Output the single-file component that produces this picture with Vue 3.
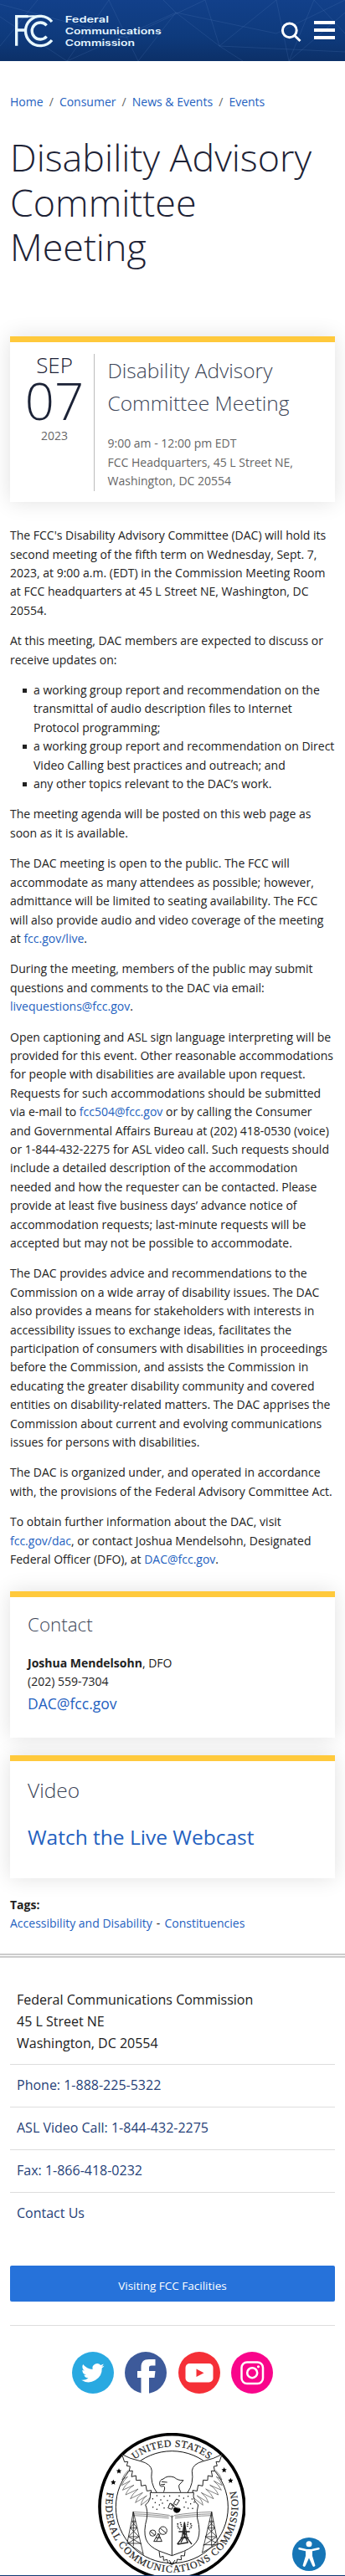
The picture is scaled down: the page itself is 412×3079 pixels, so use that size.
<script setup>
const crumbs = ['Home', 'Consumer', 'News & Events', 'Events']
const contacts = ['Phone: 1-888-225-5322', 'ASL Video Call: 1-844-432-2275', 'Fax: 1-866-418-0232', 'Contact Us']
const stars = [[126, 191], [106, 231], [503, 187], [526, 225]]
const dots = [[247, 290], [262, 279], [276, 294], [288, 281], [256, 304], [271, 312], [248, 320], [288, 323], [300, 296], [308, 280], [282, 306], [342, 280], [358, 288], [374, 281], [388, 291], [366, 302], [383, 308], [396, 302], [360, 320], [374, 324], [390, 325], [262, 328]]
</script>

<template>
  <div class="page">
    <header class="top">
      <svg class="web" viewBox="0 0 412 73" aria-hidden="true">
        <path d="M0 55L45 0M0 20L80 73L130 0M80 73L210 15L262 55L330 0M130 0L165 73L210 15L195 0M262 55L290 73M262 55L412 62M262 55L245 0M330 0L345 73L412 15M345 73L375 0L412 40M0 5L150 45L245 0M210 15L330 40L412 0" />
      </svg>
      <svg class="logo" viewBox="50 50 535 120" role="img" aria-label="FCC">
        <g fill="none" stroke="#e8f8ff" stroke-width="10">
          <path d="M100 58H58V163M58 107H92" />
          <path d="M185 77A53 53 0 1 0 185 143" />
          <path d="M166 90A30 30 0 1 0 166 130" />
          <path d="M96 58Q120 56 136 58" stroke-width="7" />
        </g>
        <g class="wordmark">
          <text x="232" y="81" textLength="157" lengthAdjust="spacingAndGlyphs">Federal</text>
          <text x="232" y="122" textLength="345" lengthAdjust="spacingAndGlyphs">Communications</text>
          <text x="232" y="163" textLength="250" lengthAdjust="spacingAndGlyphs">Commission</text>
        </g>
      </svg>
      <svg class="search" viewBox="0 0 26 26"><circle cx="10.8" cy="10.3" r="8.4" /><path d="M16.8 16.5L23.5 23" /></svg>
      <div class="menu"><i /><i /><i /></div>
    </header>

    <main>
      <nav class="crumbs">
        <template v-for="(c, i) in crumbs" :key="c"><span v-if="i" class="slash">/</span><a>{{ c }}</a></template>
      </nav>
      <h1>Disability Advisory<br>Committee<br>Meeting</h1>

      <section class="card event">
        <div class="date">
          <div class="month">SEP</div>
          <div class="day">07</div>
          <div class="year">2023</div>
        </div>
        <div class="info">
          <h2>Disability Advisory<br>Committee Meeting</h2>
          <p>9:00 am - 12:00 pm EDT<br>FCC Headquarters, 45 L Street NE,<br>Washington, DC 20554</p>
        </div>
      </section>

      <article>
        <p>The FCC's Disability Advisory Committee (DAC) will hold its<br>second meeting of the fifth term on Wednesday, Sept. 7,<br>2023, at 9:00 a.m. (EDT) in the Commission Meeting Room<br>at FCC headquarters at 45 L Street NE, Washington, DC<br>20554.</p>
        <p>At this meeting, DAC members are expected to discuss or<br>receive updates on:</p>
        <ul>
          <li>a working group report and recommendation on the<br>transmittal of audio description files to Internet<br>Protocol programming;</li>
          <li>a working group report and recommendation on Direct<br>Video Calling best practices and outreach; and</li>
          <li>any other topics relevant to the DAC’s work.</li>
        </ul>
        <p>The meeting agenda will be posted on this web page as<br>soon as it is available.</p>
        <p>The DAC meeting is open to the public. The FCC will<br>accommodate as many attendees as possible; however,<br>admittance will be limited to seating availability. The FCC<br>will also provide audio and video coverage of the meeting<br>at <a>fcc.gov/live</a>.</p>
        <p>During the meeting, members of the public may submit<br>questions and comments to the DAC via email:<br><a>livequestions@fcc.gov</a>.</p>
        <p>Open captioning and ASL sign language interpreting will be<br>provided for this event. Other reasonable accommodations<br>for people with disabilities are available upon request.<br>Requests for such accommodations should be submitted<br>via e-mail to <a>fcc504@fcc.gov</a> or by calling the Consumer<br>and Governmental Affairs Bureau at (202) 418-0530 (voice)<br>or 1-844-432-2275 for ASL video call. Such requests should<br>include a detailed description of the accommodation<br>needed and how the requester can be contacted. Please<br>provide at least five business days’ advance notice of<br>accommodation requests; last-minute requests will be<br>accepted but may not be possible to accommodate.</p>
        <p>The DAC provides advice and recommendations to the<br>Commission on a wide array of disability issues. The DAC<br>also provides a means for stakeholders with interests in<br>accessibility issues to exchange ideas, facilitates the<br>participation of consumers with disabilities in proceedings<br>before the Commission, and assists the Commission in<br>educating the greater disability community and covered<br>entities on disability-related matters. The DAC apprises the<br>Commission about current and evolving communications<br>issues for persons with disabilities.</p>
        <p>The DAC is organized under, and operated in accordance<br>with, the provisions of the Federal Advisory Committee Act.</p>
        <p>To obtain further information about the DAC, visit<br><a>fcc.gov/dac</a>, or contact Joshua Mendelsohn, Designated<br>Federal Officer (DFO), at <a>DAC@fcc.gov</a>.</p>
      </article>

      <section class="card contact">
        <h2>Contact</h2>
        <div><b>Joshua Mendelsohn</b>, DFO</div>
        <div>(202) 559-7304</div>
        <a class="mail">DAC@fcc.gov</a>
      </section>
      <section class="card video">
        <h2>Video</h2>
        <a>Watch the Live Webcast</a>
      </section>

      <div class="tags">
        <b>Tags:</b>
        <div><a>Accessibility and Disability</a><span> - </span><a>Constituencies</a></div>
      </div>
    </main>

    <footer>
      <div class="rows">
        <address>Federal Communications Commission<br>45 L Street NE<br>Washington, DC 20554</address>
        <a v-for="c in contacts" :key="c">{{ c }}</a>
      </div>
      <button>Visiting FCC Facilities</button>
      <div class="social">
        <svg viewBox="0 0 50 50"><circle cx="25" cy="25" r="25" fill="#29a9e1" /><path fill="#fff" transform="translate(11.2 11.5) scale(1.14)" d="M24 4.6a10 10 0 0 1-2.8.8 5 5 0 0 0 2.1-2.7 10 10 0 0 1-3.1 1.2 4.9 4.9 0 0 0-8.4 4.5A14 14 0 0 1 1.7 3.1a4.9 4.9 0 0 0 1.5 6.6 4.9 4.9 0 0 1-2.2-.6v.1a4.9 4.9 0 0 0 3.9 4.8 5 5 0 0 1-2.2.1 4.9 4.9 0 0 0 4.6 3.4A9.900 9.900 0 0 1 0 19.500 14 14 0 0 0 21.500 7.100 10 10 0 0 0 24 4.600z" /></svg>
        <svg viewBox="0 0 50 50"><circle cx="25" cy="25" r="25" fill="#3d5a9a" /><path fill="#fff" d="M19.500 50V31H15V23H19.500V18.500C19.500 12 22.500 9 29 9H36.500V16.500H32C29.500 16.500 29 17.500 29 19.500V23H36.500L35.500 31H29V50z" /></svg>
        <svg viewBox="0 0 50 50"><circle cx="25" cy="25" r="25" fill="#f52f37" /><rect x="8.500" y="14" width="33" height="22.500" rx="5" fill="#fff" /><path fill="#f52f37" d="M21.500 20.500L30.500 25.200L21.500 30z" /></svg>
        <svg viewBox="0 0 50 50"><circle cx="25" cy="25" r="25" fill="#f9058b" /><rect x="12.500" y="12.500" width="25.500" height="25.500" rx="6.500" fill="none" stroke="#fff" stroke-width="2.500" /><circle cx="25.200" cy="25.200" r="6" fill="none" stroke="#fff" stroke-width="2.600" /><circle cx="32.500" cy="17.800" r="1.600" fill="#fff" /></svg>
      </div>

      <svg class="seal" viewBox="51 54 528 510" role="img" aria-label="Federal Communications Commission seal">
        <defs>
          <path id="seal-top" d="M180.400 151.500A215 215 0 0 1 451.600 151.500" />
          <path id="seal-low" d="M85.100 263A237 237 0 1 0 546.900 263" />
        </defs>
        <circle cx="316" cy="318" r="259" fill="#fff" stroke="#000" stroke-width="11" />
        <circle cx="316" cy="320" r="201" fill="none" stroke="#111" stroke-width="3" />
        <text class="ring"><textPath href="#seal-top" textLength="286" startOffset="3">UNITED STATES</textPath></text>
        <text class="ring"><textPath href="#seal-low" textLength="850" startOffset="3">FEDERAL COMMUNICATIONS COMMISSION</textPath></text>
        <path v-for="s in stars" :key="s[0]" :transform="`translate(${s[0]} ${s[1]})`" d="M0-10L2.800-3.500L9.500-3L4.500 1.500L6 8.500L0 5L-6 8.500L-4.500 1.500L-9.500-3L-2.800-3.500z" />
        <g fill="none" stroke="#222" stroke-width="3" stroke-linejoin="round">
          <path fill="#fff" d="M137 131L146 158L158 157L154 172L166 174L163 191L175 190L171 211L187 207L188 224L204 223L206 244L222 241L226 262L242 260L240 276L262 268Q237 235 244 190Q242 165 203 155Q165 147 137 131z" />
          <path fill="#fff" d="M495 131L486 158L474 157L478 172L466 174L469 191L457 190L461 211L445 207L444 224L428 223L426 244L410 241L406 262L390 260L392 276L372 268Q395 235 388 190Q390 165 429 155Q467 147 495 131z" />
          <g stroke-width="2" stroke="#444">
            <path d="M160 188Q143 203 137 222L157 211Q142 225 136 242L166 226Q146 242 139 259L180 241Q157 255 150 276L195 255Q173 273 167 290L211 268Q190 284 185 304L226 279Q208 292 205 313L238 287" />
            <path d="M472 188Q489 203 495 222L475 211Q490 225 496 242L466 226Q486 242 493 259L452 241Q475 255 482 276L437 255Q459 273 465 290L421 268Q442 284 447 304L406 279Q424 292 427 313L394 287" />
          </g>
          <path d="M286 266Q294 249 286 244Q275 250 272 239Q270 222 285 219Q300 205 324 213Q337 225 357 224L345 237Q336 241 347 266M279 229L299 231M275 240L291 238" />
          <path fill="#fff" d="M238 268H394Q389 294 410 312Q404 331 407 360Q420 408 409 435Q397 462 359 478L316 494L272 478Q233 462 223 435Q213 408 226 360Q230 331 221 312Q243 294 238 268z" />
          <path d="M316 350V494" />
          <path stroke-width="1.500" d="M176 337Q250 341 305 349L316 356L327 349Q380 340 459 337M176 344Q250 347 305 354M176 350Q250 353 305 360M459 344Q380 347 327 354M459 350Q380 353 327 360M176 337V350M459 337V350" />
          <path stroke-width="2.500" d="M178 337L155 452M178 337L214 491M458 337L424 485M458 337L481 452M172 370H186M167 395H191M160 426H198M156 450H206M450 370H465M444 395H470M435 426H477M428 455H481M186 370L167 395L198 426L158 450L213 487M172 370L191 395L160 426L206 452M450 370L470 395L435 426L481 452L426 482M465 370L444 395L477 426L428 458M178 337V460M458 337V460" />
          <path d="M270 478L273 500L285 496L286 511L299 508L301 519L316 526L333 517L335 507L350 509L348 494L361 495L363 478M316 526L306 510M316 526L327 510" />
          <path d="M302 323L315 328L322 312L309 306zM322 307L332 291L343 296L332 313zM312 311L328 319M325 322L344 325Q346 337 332 339Q319 337 322 324" />
          <circle cx="247" cy="413" r="11" /><circle cx="284" cy="404" r="14" />
          <path d="M239 407L255 421M273 395L296 414M267 414L251 443H280L267 414M258 430H276M274 415L260 443" />
          <path stroke-width="4" d="M361 374L352 430L335 453M361 374L370 430L387 453M340 408L380 408M347 430L376 430M355 408L373 447L337 453M369 408L348 447M361 374V430" />
          <path stroke-width="5" stroke-dasharray="4 3" d="M337 378Q335 397 346 398M382 378Q391 390 379 398M346 374L351 390M374 373L371 390" />
        </g>
        <path d="M323 322L347 327Q345 342 330 340Q321 336 323 322z" />
        <circle v-for="d in dots" :key="d.join()" :cx="d[0]" :cy="d[1]" r="2.200" />
      </svg>
      <div class="bar" />
      <svg class="access" viewBox="0 0 40 40"><circle cx="20" cy="20" r="20" fill="#1675b6" /><circle cx="20" cy="7.800" r="3.500" fill="#fff" /><path fill="none" stroke="#fff" stroke-linecap="round" stroke-width="2.500" d="M8.500 13.200L17 15.200H23L31.500 13.200" /><path fill="#fff" d="M16 14H24V22L27.500 33.500Q26 36 24.300 34L20 24.500L15.700 34Q14 36 12.500 33.500L16 22z" /></svg>
    </footer>
  </div>
</template>

<style>
body { margin: 0; background: #fff; }
</style>

<style scoped>
.page { position: relative; width: 412px; height: 3079px; overflow: hidden; background: #fff; color: #212121; font: 14px/22.4px "Open Sans", "Noto Sans", sans-serif; }
.page * { box-sizing: border-box; }
a { color: #2461c0; }
p, h1, h2 { margin: 0; }
h1, h2 { font-weight: 300; }
.top { position: relative; display: flex; height: 73px; padding-left: 16.7px; background: linear-gradient(#12408a, #0e3a7c 60%, #0c3068); }
.web { position: absolute; inset: 0; width: 412px; height: 73px; fill: none; stroke: #5d87c4; stroke-opacity: .2; }
.logo { position: relative; width: 178.3px; height: 40px; margin-top: 16.7px; }
.wordmark { fill: #e4f5ff; font: 600 32px Inter, "Liberation Sans", sans-serif; }
.search { position: relative; width: 26px; height: 26px; margin: 26px 0 0 140px; fill: none; stroke: #fff; stroke-width: 3; }
.menu { position: relative; display: flex; flex-direction: column; gap: 5px; margin: 25px 0 0 14px; width: 25px; }
.menu i { height: 4px; background: #fff; }
main { padding: 0 12px; }
.crumbs { display: flex; margin-top: 38px; height: 22px; }
.slash { width: 19.300px; text-align: center; color: #666; }
h1 { margin-top: 28px; height: 161px; font-size: 44.8px; line-height: 53.700px; color: #1d2235; }
.card { background: #fff; border-top: 7px solid #ffc93c; box-shadow: 0 0 24px rgba(0, 0, 0, .12); }
.event { display: flex; margin-top: 80px; height: 198px; padding-top: 14px; }
.date { width: 101px; height: 164px; padding-left: 6px; border-right: 1px solid #bbb; text-align: center; color: #1b2236; font-weight: 300; }
.month { font-size: 26px; line-height: 26px; }
.day { font-size: 61.600px; line-height: 58px; }
.year { line-height: 27px; color: #666; font-weight: 400; }
.info { padding-left: 15.500px; color: #666; }
h2 { font-size: 24.500px; line-height: 39.200px; color: #3c4557; }
.info p { margin-top: 18px; }
article { margin-top: 29.200px; height: 1272.800px; }
article p, ul { margin: 0 0 14px; }
ul { padding: 0; list-style: none; }
li { position: relative; padding-left: 28px; }
li::before { content: ""; position: absolute; left: 14.500px; top: 9px; width: 5px; height: 5px; background: #212121; }
.contact { height: 175px; padding: 13px 21px; }
.contact h2 { font-size: 22.400px; height: 55px; }
.mail { display: block; font-size: 17.500px; line-height: 28px; }
.video { position: relative; margin-top: 21px; height: 147px; padding: 15px 21px; }
.video h2 { line-height: 39px; }
.video a { display: block; margin-top: 17.500px; font-size: 24.500px; line-height: 39.200px; }
.tags { height: 90px; padding-top: 21px; }
.tags b { display: block; }
.tags div { white-space: pre; }
.tags span { padding: 0 1.500px; }
footer { padding: 0 12px; border-top: 5px double #ccc; }
.rows { font-size: 16px; line-height: 25.600px; }
address { height: 127.500px; padding: 38.500px 8px 0; font-style: normal; }
.rows a { display: block; height: 50.800px; padding: 12px 8px 0; border-top: 1px solid #ddd; color: #263f78; }
button { display: block; width: 388px; height: 43px; margin-top: 37.500px; padding: 4px 0 0; border: 0; border-radius: 2px; background: #2672da; color: #fff; font: 500 13.500px/22px "Open Sans", sans-serif; }
.social { display: flex; justify-content: center; gap: 13.300px; margin-top: 28px; padding-top: 31px; border-top: 1px solid #ddd; }
.social svg { width: 50px; height: 50px; }
.seal { display: block; width: 176px; height: 170px; margin: 47px 0 0 105px; }
.ring { font: 36px "Liberation Serif", serif; fill: #222; stroke: #222; stroke-width: .6px; }
.bar { height: 2px; margin: 0 -12px; background: #123c77; }
.access { position: absolute; left: 349px; top: 3033px; width: 40px; height: 40px; }
</style>
